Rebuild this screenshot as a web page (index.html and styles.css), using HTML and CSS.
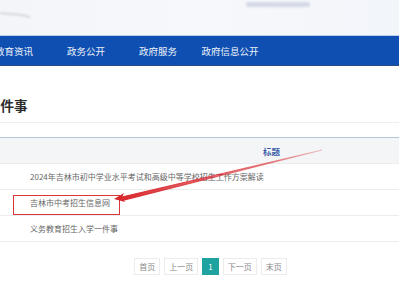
FILE: index.html
```html
<!DOCTYPE html>
<html lang="zh-CN">
<head>
  <meta charset="UTF-8" />
  <title>义务教育招生入学一件事</title>
  <link rel="stylesheet" href="styles.css">
</head>
<body>
  <div class="banner">
    <svg class="banner-art" width="399" height="36" viewBox="0 0 399 36">
      <rect x="246" y="2" width="64" height="5" rx="2" fill="#bcc6d8" opacity="0.6"/>
      <path d="M0 13 L22 15 L30 17" stroke="#b8bcc4" stroke-width="1.5" fill="none" opacity="0.7"/>
    </svg>
  </div>

  <div class="nav">
    <ul class="nav-list">
      <li>教育资讯</li>
      <li>政务公开</li>
      <li>政府服务</li>
      <li>政府信息公开</li>
    </ul>
  </div>

  <div class="main">
    <h2 class="page-title">一件事</h2>

    <table class="list">
      <thead>
        <tr><th>标题</th></tr>
      </thead>
      <tbody>
        <tr><td>2024年吉林市初中学业水平考试和高级中等学校招生工作方案解读</td></tr>
        <tr><td><span class="mark">吉林市中考招生信息网</span></td></tr>
        <tr><td>义务教育招生入学一件事</td></tr>
      </tbody>
    </table>

    <div class="pager">
      <span class="pg">首页</span>
      <span class="pg">上一页</span>
      <span class="pg current">1</span>
      <span class="pg">下一页</span>
      <span class="pg">末页</span>
    </div>
  </div>

  <!-- 标注箭头 -->
  <svg class="annot" width="399" height="300" viewBox="0 0 399 300">
    <defs>
      <linearGradient id="fade" x1="117" y1="199" x2="322" y2="150" gradientUnits="userSpaceOnUse">
        <stop offset="0" stop-color="#d8262b"/>
        <stop offset="1" stop-color="#d8262b" stop-opacity="0.25"/>
      </linearGradient>
    </defs>
    <path d="M122 197 L322 150 L124 200 Z" fill="url(#fade)" stroke="url(#fade)" stroke-width="1.2"/>
    <path d="M114 199 L124 193 L122 197.5 L125 202 Z" fill="#d8262b"/>
  </svg>
</body>
</html>
```

FILE: styles.css
```css
body {
  margin: 0;
  padding: 0;
  font-family: "Noto Sans CJK SC", "Noto Sans", sans-serif;
  background: #fff;
  overflow: hidden;
  position: relative;
  width: 399px;
  height: 300px;
}

.banner {
  height: 35px;
  background: linear-gradient(90deg, #f3f5f9 0%, #f7f8fb 50%, #f2f5fa 100%);
  border-bottom: 1px solid #b9d0ee;
}

.banner-art {
  display: block;
  filter: blur(0.8px);
}

.nav {
  height: 29px;
  background: #0f4fb2;
  border-bottom: 1px solid #2a4a8a;
}

.nav-list {
  list-style: none;
  margin: 0 0 0 -22px;
  padding: 0;
  display: flex;
}

.nav-list li {
  width: 72px;
  text-align: center;
  line-height: 30px;
  font-size: 9.5px;
  color: #eef3fb;
  white-space: nowrap;
}

.main {
  padding-top: 30px;
}

.page-title {
  margin: 0 0 0 -13px;
  font-size: 13.5px;
  font-weight: bold;
  color: #2c2c2c;
  line-height: 18px;
  padding-bottom: 8px;
  border-bottom: 1px solid #efefef;
}

.list {
  width: 100%;
  border-collapse: collapse;
  margin-top: 14px;
  font-size: 8px;
}

.list th {
  height: 25px;
  background: #f4f5f7;
  border-top: 1px solid #b5c5dc;
  color: #3c5fa8;
  font-weight: bold;
  font-size: 8.5px;
  text-align: left;
  padding: 0 0 0 263px;
}

.list td {
  height: 25px;
  border-top: 1px solid #ececec;
  border-bottom: 1px solid #ececec;
  color: #666;
  padding: 0 0 0 30px;
  white-space: nowrap;
}

.mark {
  position: relative;
}

.mark::after {
  content: "";
  position: absolute;
  left: -17px;
  top: -2px;
  width: 105px;
  height: 18px;
  border: 1.5px solid #d9363a;
}

.pager {
  display: flex;
  justify-content: center;
  gap: 4px;
  margin: 16px 0 0 22px;
}

.pg {
  height: 15px;
  line-height: 15px;
  padding: 0 4px;
  border: 1px solid #ececec;
  font-size: 8px;
  color: #888;
}

.pg.current {
  background: #1fa3a0;
  border-color: #1fa3a0;
  color: #fff;
  padding: 0 5px;
}

.annot {
  position: absolute;
  left: 0;
  top: 0;
  pointer-events: none;
}
```
